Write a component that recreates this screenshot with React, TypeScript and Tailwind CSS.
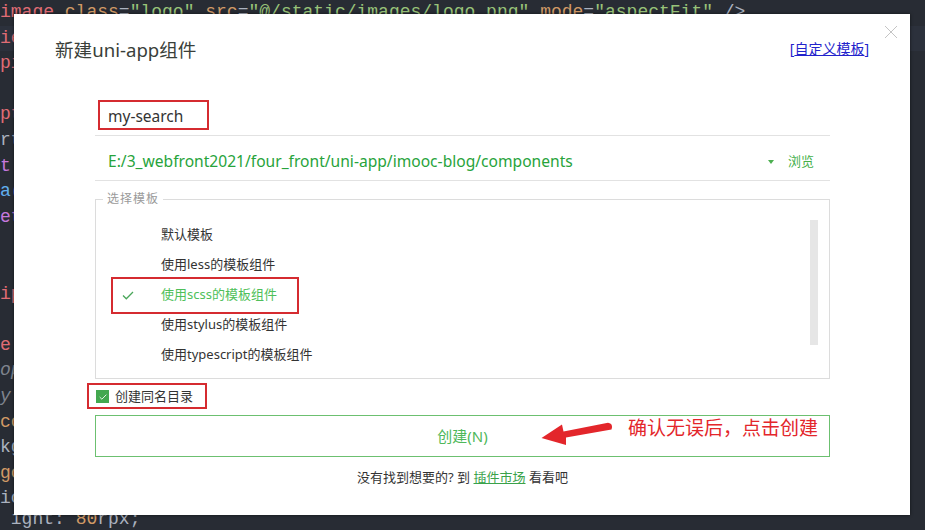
import React from 'react';

const sans = { fontFamily: '"Noto Sans", "Noto Sans CJK SC", sans-serif' };
const mono = { fontFamily: '"Liberation Mono", "DejaVu Sans Mono", monospace' };

type Seg = [string, string, boolean?];

const codeLines: Seg[][] = [
  [
    ['image', '#e06c75'],
    [' class', '#d19a66'],
    ['=', '#abb2bf'],
    ['"logo"', '#98c379'],
    [' src', '#d19a66'],
    ['=', '#abb2bf'],
    ['"@/static/images/logo.png"', '#98c379'],
    [' mode', '#d19a66'],
    ['=', '#abb2bf'],
    ['"aspectFit"', '#98c379'],
    [' />', '#abb2bf'],
  ],
  [['iew>', '#e06c75']],
  [['pic', '#e06c75']],
  [],
  [['pt>', '#e06c75']],
  [['rt', '#abb2bf']],
  [['t ', '#c678dd']],
  [['a(', '#61afef']],
  [['et', '#c678dd']],
  [],
  [],
  [['ipt', '#e06c75']],
  [],
  [['e ', '#e06c75']],
  [['op', '#7f848e', true]],
  [['y ', '#7f848e', true]],
  [['co', '#d19a66']],
  [['kg', '#abb2bf']],
  [['go', '#d19a66']],
  [['ic', '#abb2bf']],
];

const templates = [
  '默认模板',
  '使用less的模板组件',
  '使用scss的模板组件',
  '使用stylus的模板组件',
  '使用typescript的模板组件',
];

const CheckMark = ({ className }: { className?: string }) => (
  <svg viewBox="0 0 12 9" className={className} fill="none">
    <path d="M1 4.5 L4.3 7.8 L11 1" stroke="currentColor" strokeWidth="1.3" />
  </svg>
);

const App = () => {
  return (
    <div className="relative w-[925px] h-[530px] overflow-hidden bg-[#282c34]">
      {/* editor behind the dialog */}
      <div className="text-[18px] leading-[25.6px] whitespace-pre" style={mono}>
        {codeLines.map((line, i) => (
          <div key={i} className={i === 1 ? 'h-[25.6px] bg-[#2c313c]' : 'h-[25.6px]'}>
            {line.map(([t, c, it], j) => (
              <span key={j} style={{ color: c }} className={it ? 'italic' : ''}>
                {t}
              </span>
            ))}
          </div>
        ))}
        <div className="mt-[1px] h-[13px] leading-[13px] text-[#abb2bf]">
          {' ight: '}
          <span className="text-[#d19a66]">80</span>
          rpx;
        </div>
      </div>

      {/* dialog */}
      <div
        className="absolute left-[14px] top-[14px] w-[896px] h-[501px] bg-white shadow-[0_0_3px_rgba(0,0,0,0.6)] text-[#333]"
        style={sans}
      >
        <svg className="absolute right-[12px] top-[11px] w-[14px] h-[14px]" viewBox="0 0 14 14">
          <path d="M1 1 L13 13 M13 1 L1 13" stroke="#c4c4c4" strokeWidth="1" />
        </svg>

        <div className="flex items-center justify-between pl-[41px] pr-[41px] pt-[23px]">
          <div className="text-[18.6px] leading-[26px] text-[#3a3f3a]">新建uni-app组件</div>
          <div className="text-[14px] leading-[18px] text-[#2222cc] -mt-[3px]">
            [<span className="underline">自定义模板</span>]
          </div>
        </div>

        <div className="ml-[81px] w-[735px] mt-[36px]">
          {/* name input */}
          <div className="relative h-[37px] flex items-center pl-[13px] border-b border-[#e2e2e2]">
            <span className="text-[15.5px] text-[#333]">my-search</span>
            <div className="absolute left-[3px] top-[1px] w-[111px] h-[30px] border-2 border-[#d52b30]" />
          </div>

          {/* path */}
          <div className="h-[45px] flex items-center pt-[7px] pl-[13px] pr-[16px] border-b border-[#e2e2e2]">
            <span className="flex-1 text-[15.6px] text-[#27a33b]">
              E:/3_webfront2021/four_front/uni-app/imooc-blog/components
            </span>
            <svg viewBox="0 0 6 4" className="w-[6px] h-[4px] mr-[14px]">
              <path d="M0 0 L6 0 L3 4 Z" fill="#4caf50" />
            </svg>
            <span className="text-[13px] text-[#45b04a]">浏览</span>
          </div>

          {/* template list */}
          <fieldset className="mt-[10px] border border-[#dcdcdc] px-0">
            <legend className="ml-[7px] px-[4px] text-[12px] leading-[16px] text-[#9a9a9a] tracking-[1px]">
              选择模板
            </legend>
            <div className="flex pt-[13px] pb-[8px] pr-[11px]">
              <div className="flex-1">
                {templates.map((t, i) => (
                  <div key={t} className="relative h-[30px] flex items-center text-[13px]">
                    <div className="w-[65px] pl-[26px]">
                      {i === 2 && <CheckMark className="w-[12px] h-[9px] text-[#4aa65a]" />}
                    </div>
                    <span className={i === 2 ? 'text-[#4fbf5a]' : 'text-[#333]'}>{t}</span>
                    {i === 2 && (
                      <div className="absolute left-[15px] -top-[3px] w-[188px] h-[37px] border-2 border-[#d52b30]" />
                    )}
                  </div>
                ))}
              </div>
              <div className="w-[8px] h-[125px] bg-[#e6e6e6]" />
            </div>
          </fieldset>

          {/* same-name folder */}
          <div className="relative mt-[4px] h-[26px] flex items-center pl-[1px] pt-[1px]">
            <span className="w-[13px] h-[13px] bg-[#43a84f] flex items-center justify-center">
              <CheckMark className="w-[8px] h-[6px] text-white" />
            </span>
            <span className="ml-[6px] text-[13px] text-[#333]">创建同名目录</span>
            <div className="absolute -left-[8px] top-0 w-[120px] h-[26px] border-2 border-[#d52b30]" />
          </div>

          {/* create button */}
          <div className="mt-[6px] h-[42px] border border-[#6cc070] flex items-center justify-center text-[15px] text-[#4fb85a]">
            创建(N)
          </div>

          <div className="mt-[12px] text-center text-[13px] leading-[16px] text-[#333]">
            没有找到想要的? 到 <span className="text-[#3aa24a] underline">插件市场</span> 看看吧
          </div>
        </div>

        {/* annotation */}
        <svg className="absolute left-[526px] top-[406px] w-[90px] h-[44px]" viewBox="540 420 90 44">
          <path
            d="M541.5 438 L562 424.5 L563.5 431.5 L608 422.8 Q613.5 423.5 611.5 429.5 L566 437.5 L566 445 Z"
            fill="#e3262b"
          />
        </svg>
        <div className="absolute left-[614px] top-[402px] text-[19px] leading-[24px] text-[#e3262b]">
          确认无误后，点击创建
        </div>
      </div>
    </div>
  );
};

export default App;
